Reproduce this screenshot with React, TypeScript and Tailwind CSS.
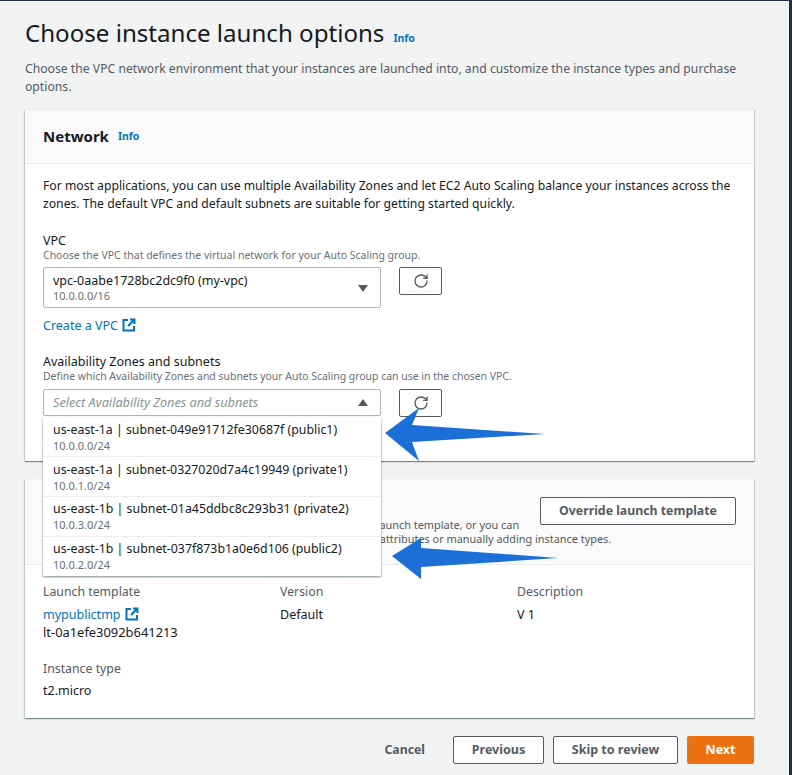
import { RotateCw } from "lucide-react";

const font = "font-['Noto_Sans',sans-serif]";
const cardShadow = "shadow-[0_1px_1px_0_rgba(0,28,36,0.3),1px_1px_1px_0_rgba(0,28,36,0.15),-1px_1px_1px_0_rgba(0,28,36,0.15)]";

const subnets = [
  { name: "us-east-1a | subnet-049e91712fe30687f (public1)", cidr: "10.0.0.0/24" },
  { name: "us-east-1a | subnet-0327020d7a4c19949 (private1)", cidr: "10.0.1.0/24" },
  { name: "us-east-1b | subnet-01a45ddbc8c293b31 (private2)", cidr: "10.0.3.0/24" },
  { name: "us-east-1b | subnet-037f873b1a0e6d106 (public2)", cidr: "10.0.2.0/24" },
];

function ExternalIcon() {
  return (
    <svg viewBox="0 0 14 14" className="ml-1 inline-block h-[14px] w-[14px] align-[-2px]" fill="none" stroke="#0073bb" strokeWidth="2">
      <path d="M6 2H1.5v10.5H12V8" />
      <path d="M8 1.5h4.5V6M12.5 1.5 6 8" />
    </svg>
  );
}

function RefreshButton() {
  return (
    <button className="ml-[18px] flex h-[28px] w-[43px] items-center justify-center rounded-[2px] border border-[#545b64] bg-white text-[#545b64]">
      <RotateCw className="h-4 w-4" strokeWidth={2} />
    </button>
  );
}

export default function App() {
  return (
    <div className={`${font} relative h-[775px] w-[792px] overflow-hidden border-t border-[#232f3e] bg-[#f2f3f3] text-[12.5px] text-[#16191f]`}>
      <div className="h-full w-[788px] pl-[25px] pr-[34px]">
        <div className="flex items-baseline pt-[17px]">
          <h1 className="text-[24.1px] leading-[30px] font-normal">Choose instance launch options</h1>
          <a className="ml-[9px] text-[10.5px] font-bold text-[#0073bb]">Info</a>
        </div>
        <p className="mt-[12px] text-[12.2px] leading-[18px] text-[#545b64]">
          Choose the VPC network environment that your instances are launched into, and customize the instance types and purchase options.
        </p>

        <section className={`mt-[13px] h-[352px] border-t border-[#eaeded] bg-white ${cardShadow}`}>
          <div className="flex h-[54px] items-center border-b border-[#eaeded] bg-[#fafafa] px-[18px]">
            <h2 className="text-[15px] font-bold">Network</h2>
            <a className="ml-[9px] text-[10.5px] font-bold text-[#0073bb]">Info</a>
          </div>
          <div className="px-[18px] pt-[13px]">
            <p className="text-[12.2px] leading-[18px]">
              For most applications, you can use multiple Availability Zones and let EC2 Auto Scaling balance your instances across the zones. The default VPC and default subnets are suitable for getting started quickly.
            </p>
            <div className="mt-[19px] leading-[18px]">VPC</div>
            <div className="-mt-[2px] text-[10.5px] leading-[14px] text-[#687078]">Choose the VPC that defines the virtual network for your Auto Scaling group.</div>
            <div className="mt-[5px] flex">
              <div className="flex h-[41px] w-[338px] items-center justify-between rounded-[2px] border border-[#aab7b8] bg-white pr-[12px] pl-[9px]">
                <div>
                  <div className="leading-[16px]">vpc-0aabe1728bc2dc9f0 (my-vpc)</div>
                  <div className="text-[11px] leading-[14px] text-[#687078]">10.0.0.0/16</div>
                </div>
                <div className="mt-[1px] h-0 w-0 border-x-[5px] border-t-[7px] border-x-transparent border-t-[#545b64]" />
              </div>
              <RefreshButton />
            </div>
            <a className="mt-[9px] block leading-[18px] text-[#0073bb]">Create a VPC<ExternalIcon /></a>
            <div className="mt-[18px] leading-[18px]">Availability Zones and subnets</div>
            <div className="-mt-[2px] text-[10.45px] leading-[14px] text-[#687078]">Define which Availability Zones and subnets your Auto Scaling group can use in the chosen VPC.</div>
            <div className="mt-[6px] flex">
              <div className="flex h-[27px] w-[338px] items-center justify-between rounded-[2px] border border-[#aab7b8] bg-white pr-[12px] pl-[9px]">
                <span className="text-[12.7px] italic text-[#879596]">Select Availability Zones and subnets</span>
                <div className="h-0 w-0 border-x-[5px] border-b-[7px] border-x-transparent border-b-[#545b64]" />
              </div>
              <RefreshButton />
            </div>
          </div>
        </section>

        <section className={`mt-[18px] h-[239px] bg-white ${cardShadow}`}>
          <div className="flex h-[86px] justify-between border-b border-[#eaeded] bg-[#fafafa] px-[18px]">
            <p className="w-[480px] min-w-0 pt-[39px] text-[10.9px] leading-[14px] whitespace-nowrap text-[#545b64]">
              You can keep the instance types and purchase options from your launch template, or you can
              <br />
              also override the launch template by specifying different instance attributes or manually adding instance types.
            </p>
            <button className="mt-[18px] h-[28px] w-[196px] shrink-0 rounded-[2px] border border-[#545b64] bg-white text-[12.3px] font-bold text-[#545b64]">
              Override launch template
            </button>
          </div>
          <div className="grid grid-cols-[237px_237px_1fr] px-[18px] pt-[18px]">
            <div className="text-[12.3px] leading-[18px] text-[#545b64]">Launch template</div>
            <div className="text-[12.3px] leading-[18px] text-[#545b64]">Version</div>
            <div className="text-[12.3px] leading-[18px] text-[#545b64]">Description</div>
            <div className="mt-[5px]">
              <a className="block leading-[18px] text-[#0073bb]">mypublictmp<ExternalIcon /></a>
              <div className="text-[12.9px] leading-[17px]">lt-0a1efe3092b641213</div>
            </div>
            <div className="mt-[5px] leading-[18px]">Default</div>
            <div className="mt-[5px] leading-[18px]">V 1</div>
            <div className="col-span-3 mt-[19px] text-[12.3px] leading-[18px] text-[#545b64]">Instance type</div>
            <div className="col-span-3 mt-[4px] leading-[18px]">t2.micro</div>
          </div>
        </section>

        <div className="mt-[18px] flex items-center justify-end">
          <a className="mr-[28px] text-[12.3px] font-bold text-[#545b64]">Cancel</a>
          <button className="h-[28px] w-[91px] rounded-[2px] border border-[#545b64] bg-white font-bold text-[#545b64]">Previous</button>
          <button className="ml-[9px] h-[28px] w-[125px] rounded-[2px] border border-[#545b64] bg-white font-bold text-[#545b64]">Skip to review</button>
          <button className="ml-[9px] h-[28px] w-[67px] rounded-[2px] bg-[#ec7211] font-bold text-white">Next</button>
        </div>
      </div>

      <div className="absolute top-0 right-0 h-full w-[3px] bg-[#232f3e]" />

      <div className="absolute top-[416px] left-[43px] w-[338px] bg-white shadow-[0_1px_2px_rgba(0,28,36,0.5)]">
        {subnets.map((s) => (
          <div key={s.cidr} className="h-[40px] border-b border-[#eaeded] pt-[4px] pl-[10px] last:h-[39px] last:border-b-0 [&:nth-child(n+3)]:pt-[3px]">
            <div className="text-[12.35px] leading-[17px]">{s.name}</div>
            <div className="text-[11px] leading-[15px] text-[#687078]">{s.cidr}</div>
          </div>
        ))}
      </div>

      {/* hand-drawn annotation arrows on top of the screenshot */}
      <svg viewBox="0 0 160 53" className="absolute top-[407px] left-[385px] h-[53px] w-[160px]">
        <path d="M0 25 L34 0 L27 17 L160 26 L27 34 L34 53 Z" fill="#1b6fd6" />
      </svg>
      <svg viewBox="0 0 166 41" className="absolute top-[537px] left-[392px] h-[41px] w-[166px]">
        <path d="M0 18 L29 0 L29 10 L166 20 L29 29 L29 41 Z" fill="#1b6fd6" />
      </svg>
    </div>
  );
}
